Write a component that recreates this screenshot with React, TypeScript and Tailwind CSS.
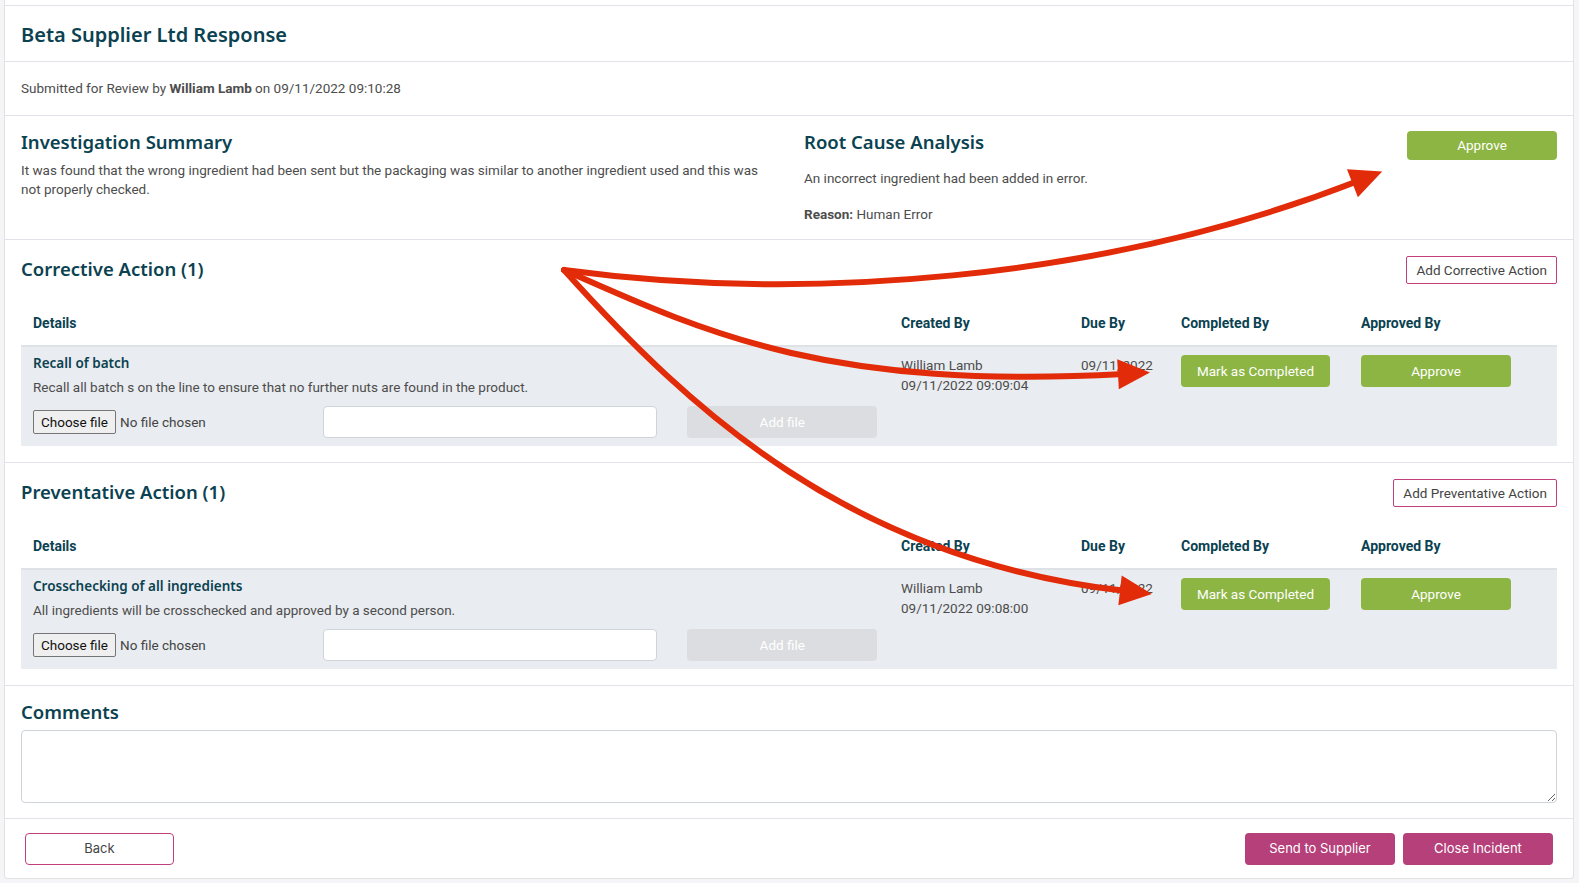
import React from "react";

const H = "font-['Noto_Sans',sans-serif] font-semibold text-[#0b4251]";
const BODY = "font-['Roboto',sans-serif]";
const UI = "font-['Inter',sans-serif]";

const COLS = "grid grid-cols-[868px_180px_100px_180px_208px]";

function GreenBtn({ children, className = "" }: { children: React.ReactNode; className?: string }) {
  return (
    <button
      className={`${BODY} bg-[#8db543] text-white text-[13.5px] rounded-[4px] flex items-center justify-center ${className}`}
    >
      {children}
    </button>
  );
}

function ActionSection({
  title,
  addLabel,
  rowTitle,
  rowDesc,
  created,
}: {
  title: string;
  addLabel: string;
  rowTitle: string;
  rowDesc: string;
  created: string;
}) {
  return (
    <section className="px-4 pt-4 pb-4 border-b border-[#e3e1e9]">
      <div className="flex items-start justify-between">
        <h2 className={`${H} pt-px text-[18.5px] leading-6`}>{title}</h2>
        <button
          className={`${BODY} h-[28px] px-[9px] border border-[#c0407e] rounded-[2px] text-[13.5px] text-[#444]`}
        >
          {addLabel}
        </button>
      </div>
      <div className="mt-[17px]">
        <div className={`${COLS} ${BODY} border-b-2 border-[#dee2e6] text-[14px] font-bold text-[#0b4251] leading-5`}>
          <div className="px-3 py-3">Details</div>
          <div className="px-3 py-3">Created By</div>
          <div className="px-3 py-3">Due By</div>
          <div className="px-3 py-3">Completed By</div>
          <div className="px-3 py-3">Approved By</div>
        </div>
        <div className={`${COLS} bg-[#e9ecf0] text-[13.5px] text-[#4d4d4d] ${BODY}`}>
          <div className="px-3 pt-2 pb-2">
            <div className={`${H} text-[13.5px] leading-4`}>{rowTitle}</div>
            <div className="mt-[6px] leading-5">{rowDesc}</div>
            <div className="mt-[9px] flex items-center h-8">
              <div className="w-[291px] flex items-center">
                <span className="h-6 px-[7px] flex items-center border border-[#767676] rounded-[2px] bg-[#efefef] text-[#111]">
                  Choose file
                </span>
                <span className="ml-[4px] text-[#444]">No file chosen</span>
              </div>
              <div className="w-[335px] h-8 bg-white border border-[#ced4da] rounded-[4px]"></div>
              <div className="ml-[30px] w-[190px] h-8 rounded-[4px] bg-[#dcdde0] text-white flex items-center justify-center">
                Add file
              </div>
            </div>
          </div>
          <div className="px-3 pt-2 leading-5">
            <div>William Lamb</div>
            <div>{created}</div>
          </div>
          <div className="px-3 pt-2 leading-5">09/11/2022</div>
          <div className="px-3 pt-2">
            <GreenBtn className="w-[149px] h-8">Mark as Completed</GreenBtn>
          </div>
          <div className="px-3 pt-2">
            <GreenBtn className="w-[150px] h-8">Approve</GreenBtn>
          </div>
        </div>
      </div>
    </section>
  );
}

function Arrow({ d, end, dir }: { d: string; end: [number, number]; dir: [number, number] }) {
  const len = Math.hypot(dir[0], dir[1]);
  const ux = dir[0] / len;
  const uy = dir[1] / len;
  const px = -uy;
  const py = ux;
  const tip: [number, number] = [end[0] + ux * 26, end[1] + uy * 26];
  const bx = end[0] - ux * 6;
  const by = end[1] - uy * 6;
  const a: [number, number] = [bx + px * 15, by + py * 15];
  const b: [number, number] = [bx - px * 15, by - py * 15];
  return (
    <g>
      <path d={d} fill="none" stroke="#e22b08" strokeWidth={6} strokeLinecap="round" />
      <polygon points={`${tip[0]},${tip[1]} ${a[0]},${a[1]} ${b[0]},${b[1]}`} fill="#e22b08" />
    </g>
  );
}

export default function App() {
  return (
    <div className="relative w-[1579px] min-h-[883px] bg-[#f5f5f7] overflow-hidden">
      <div className="ml-[4px] w-[1570px] bg-white border-x border-b border-[#e2e2e2] rounded-b-[4px]">
        <div className="h-[6px] border-b border-[#e3e1e9]"></div>
        <div className="px-4 pt-[15px] pb-[12px] border-b border-[#e3e1e9]">
          <h1 className={`${H} text-[20px] leading-7`}>Beta Supplier Ltd Response</h1>
        </div>
        <div className={`px-4 pt-[16px] pb-[16px] border-b border-[#e3e1e9] ${BODY} text-[13.5px] leading-[21px] text-[#4d4d4d]`}>
          Submitted for Review by <span className="font-bold">William Lamb</span> on 09/11/2022 09:10:28
        </div>
        <div className="px-4 pt-[16px] pb-[15px] border-b border-[#e3e1e9] flex">
          <div className="w-[768px] pr-[25px]">
            <h2 className={`${H} text-[18.5px] leading-5`}>Investigation Summary</h2>
            <p className={`${BODY} mt-[9px] text-[13.5px] leading-[19px] text-[#4d4d4d]`}>
              It was found that the wrong ingredient had been sent but the packaging was similar to another ingredient used and this was not properly checked.
            </p>
          </div>
          <div className="flex-1 pl-[15px] flex justify-between items-start">
            <div>
              <h2 className={`${H} text-[18.5px] leading-5`}>Root Cause Analysis</h2>
              <p className={`${BODY} mt-[17px] text-[13.5px] leading-[19px] text-[#4d4d4d]`}>
                An incorrect ingredient had been added in error.
              </p>
              <p className={`${BODY} mt-[17px] text-[13.5px] leading-[19px] text-[#4d4d4d]`}>
                <span className="font-bold">Reason:</span> Human Error
              </p>
            </div>
            <GreenBtn className="w-[150px] h-[29px] -mt-px">Approve</GreenBtn>
          </div>
        </div>

        <ActionSection
          title="Corrective Action (1)"
          addLabel="Add Corrective Action"
          rowTitle="Recall of batch"
          rowDesc="Recall all batch s on the line to ensure that no further nuts are found in the product."
          created="09/11/2022 09:09:04"
        />
        <ActionSection
          title="Preventative Action (1)"
          addLabel="Add Preventative Action"
          rowTitle="Crosschecking of all ingredients"
          rowDesc="All ingredients will be crosschecked and approved by a second person."
          created="09/11/2022 09:08:00"
        />

        <section className="px-4 pt-[17px] pb-[15px] border-b border-[#e3e1e9]">
          <h2 className={`${H} text-[18.5px] leading-[18px]`}>Comments</h2>
          <textarea className="mt-[9px] block w-full h-[73px] border border-[#ced4da] rounded-[4px] bg-white"></textarea>
        </section>

        <div className="px-5 pt-[14px] pb-[13px] flex justify-between">
          <button className={`${UI} w-[149px] h-8 border border-[#c0407e] rounded-[4px] text-[13px] text-[#444]`}>
            Back
          </button>
          <div className="flex gap-2">
            <button className={`${UI} w-[150px] h-8 bg-[#b5407a] rounded-[4px] text-[13px] text-white`}>
              Send to Supplier
            </button>
            <button className={`${UI} w-[150px] h-8 bg-[#b5407a] rounded-[4px] text-[13px] text-white`}>
              Close Incident
            </button>
          </div>
        </div>
      </div>

      <svg className="absolute inset-0 pointer-events-none" width="1579" height="883" viewBox="0 0 1579 883">
        <Arrow d="M564,270 C800,302 1100,282 1358,181" end={[1358, 181]} dir={[258, -101]} />
        <Arrow d="M564,270 C710,335 830,390 1124,374" end={[1124, 374]} dir={[294, -16]} />
        <Arrow d="M564,270 C690,410 850,560 1126,591" end={[1126, 591]} dir={[276, 31]} />
      </svg>
    </div>
  );
}
